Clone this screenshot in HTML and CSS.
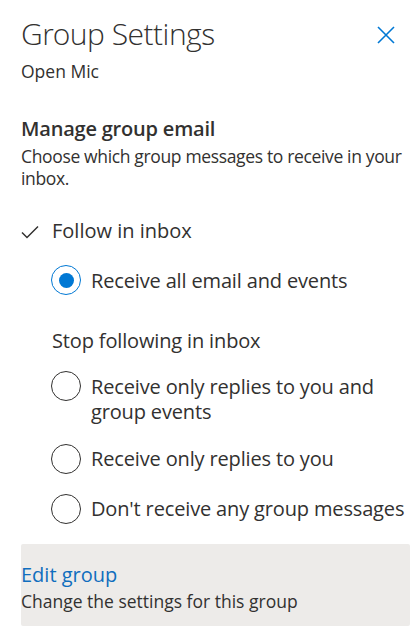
FILE: index.html
```html
<!DOCTYPE html>
<html lang="en">
<head>
<meta charset="utf-8">
<title>Group Settings</title>
<link rel="stylesheet" href="styles.css">
</head>
<body>
<div class="panel">
  <div class="header">
    <h1 class="title">Group Settings</h1>
    <button class="close" aria-label="Close">
      <svg width="18" height="18" viewBox="0 0 18 18"><path d="M1 1 L17 17 M17 1 L1 17" stroke="#0078d4" stroke-width="1.6" fill="none"/></svg>
    </button>
  </div>
  <div class="subtitle">Open Mic</div>

  <h2 class="section-title">Manage group email</h2>
  <p class="section-desc">Choose which group messages to receive in your inbox.</p>

  <div class="follow">
    <svg class="check" width="18" height="14" viewBox="0 0 18 14"><path d="M1 7.5 L6 12.5 L17 1.5" stroke="#323130" stroke-width="1.5" fill="none"/></svg>
    <span>Follow in inbox</span>
  </div>

  <div class="options">
    <div class="option">
      <span class="radio checked"></span>
      <span class="option-label">Receive all email and events</span>
    </div>
  </div>

  <div class="stop">Stop following in inbox</div>

  <div class="options">
    <div class="option">
      <span class="radio"></span>
      <span class="option-label">Receive only replies to you and group events</span>
    </div>
    <div class="option">
      <span class="radio"></span>
      <span class="option-label">Receive only replies to you</span>
    </div>
    <div class="option">
      <span class="radio"></span>
      <span class="option-label">Don't receive any group messages</span>
    </div>
  </div>

  <div class="edit-box">
    <div class="edit-link">Edit group</div>
    <div class="edit-desc">Change the settings for this group</div>
  </div>
</div>
</body>
</html>
```
FILE: styles.css
```css
* { box-sizing: border-box; }
body {
  margin: 0;
  background: #ffffff;
  font-family: "Open Sans", "Noto Sans", sans-serif;
  color: #323130;
}
.panel {
  padding: 14px 7px 0 21px;
}
.header {
  display: flex;
  justify-content: space-between;
  align-items: flex-start;
}
.title {
  margin: 0;
  font-family: "Open Sans Light", "Open Sans", sans-serif;
  font-size: 30px;
  font-weight: 300;
  line-height: 40px;
  letter-spacing: -0.5px;
  color: #323130;
}
.close {
  border: 0;
  background: none;
  padding: 0;
  margin: 12px 15px 0 0;
  width: 18px;
  height: 18px;
  display: flex;
}
.subtitle {
  margin-top: 5px;
  font-size: 17.5px;
  line-height: 24px;
}
.section-title {
  margin: 32px 0 0;
  font-size: 20px;
  font-weight: 600;
  line-height: 28px;
  letter-spacing: -0.2px;
}
.section-desc {
  margin: 2px 0 0;
  font-size: 17.5px;
  line-height: 22px;
  letter-spacing: -0.35px;
}
.follow {
  margin-top: 28px;
  display: flex;
  align-items: center;
  gap: 13px;
  font-size: 20px;
  line-height: 28px;
}
.check { flex: none; margin-top: 2px; }
.options {
  padding-left: 30px;
  display: flex;
  flex-direction: column;
  gap: 20px;
}
.follow + .options { margin-top: 20px; }
.option {
  display: flex;
  align-items: flex-start;
  gap: 10px;
}
.radio {
  flex: none;
  width: 30px;
  height: 30px;
  border-radius: 50%;
  border: 1.3px solid #323130;
  display: flex;
  align-items: center;
  justify-content: center;
}
.radio.checked { border: 1px solid #0078d4; }
.radio.checked::after {
  content: "";
  width: 15px;
  height: 15px;
  border-radius: 50%;
  background: #0078d4;
}
.option-label {
  padding-top: 2.5px;
  font-size: 20px;
  line-height: 25px;
  letter-spacing: -0.15px;
}
.stop {
  margin: 32px 0 16px 31px;
  font-size: 20px;
  line-height: 28px;
  letter-spacing: -0.15px;
}
.edit-box {
  margin-top: 20px;
  background: #edebe9;
  border-radius: 2px;
  padding: 17px 0 13px 0;
}
.edit-link {
  font-size: 20px;
  line-height: 28px;
  color: #106ebe;
}
.edit-desc {
  font-size: 17.5px;
  line-height: 24px;
}
```
